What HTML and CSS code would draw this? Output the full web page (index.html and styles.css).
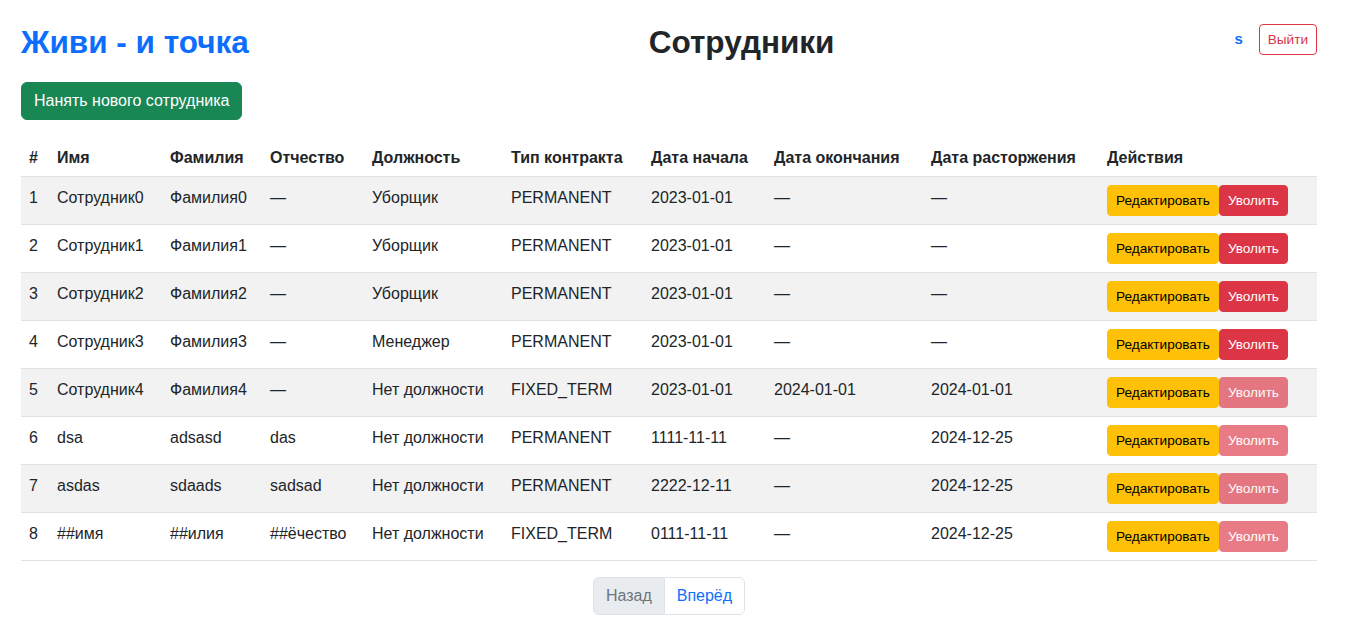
FILE: index.html
```html
<!DOCTYPE html>
<html lang="ru">
<head>
<meta charset="utf-8">
<title>Сотрудники</title>
<link rel="stylesheet" href="styles.css">
</head>
<body>
<div class="page">
  <header class="topbar">
    <h1 class="brand">Живи - и точка</h1>
    <h1 class="title">Сотрудники</h1>
    <div class="user">
      <span class="username">s</span>
      <button class="btn btn-sm btn-outline-danger">Выйти</button>
    </div>
  </header>

  <button class="btn btn-success hire">Нанять нового сотрудника</button>

  <table class="table">
    <colgroup>
      <col class="c-num"><col class="c-name"><col class="c-last"><col class="c-mid"><col class="c-pos"><col class="c-type"><col class="c-start"><col class="c-end"><col class="c-term"><col class="c-act">
    </colgroup>
    <thead>
      <tr><th>#</th><th>Имя</th><th>Фамилия</th><th>Отчество</th><th>Должность</th><th>Тип контракта</th><th>Дата начала</th><th>Дата окончания</th><th>Дата расторжения</th><th>Действия</th></tr>
    </thead>
    <tbody>
      <tr><td>1</td><td>Сотрудник0</td><td>Фамилия0</td><td>—</td><td>Уборщик</td><td>PERMANENT</td><td>2023-01-01</td><td>—</td><td>—</td><td class="act"><div class="actions"><button class="btn btn-sm btn-warning">Редактировать</button><button class="btn btn-sm btn-danger">Уволить</button></div></td></tr>
      <tr><td>2</td><td>Сотрудник1</td><td>Фамилия1</td><td>—</td><td>Уборщик</td><td>PERMANENT</td><td>2023-01-01</td><td>—</td><td>—</td><td class="act"><div class="actions"><button class="btn btn-sm btn-warning">Редактировать</button><button class="btn btn-sm btn-danger">Уволить</button></div></td></tr>
      <tr><td>3</td><td>Сотрудник2</td><td>Фамилия2</td><td>—</td><td>Уборщик</td><td>PERMANENT</td><td>2023-01-01</td><td>—</td><td>—</td><td class="act"><div class="actions"><button class="btn btn-sm btn-warning">Редактировать</button><button class="btn btn-sm btn-danger">Уволить</button></div></td></tr>
      <tr><td>4</td><td>Сотрудник3</td><td>Фамилия3</td><td>—</td><td>Менеджер</td><td>PERMANENT</td><td>2023-01-01</td><td>—</td><td>—</td><td class="act"><div class="actions"><button class="btn btn-sm btn-warning">Редактировать</button><button class="btn btn-sm btn-danger">Уволить</button></div></td></tr>
      <tr><td>5</td><td>Сотрудник4</td><td>Фамилия4</td><td>—</td><td>Нет должности</td><td>FIXED_TERM</td><td>2023-01-01</td><td>2024-01-01</td><td>2024-01-01</td><td class="act"><div class="actions"><button class="btn btn-sm btn-warning">Редактировать</button><button class="btn btn-sm btn-danger" disabled>Уволить</button></div></td></tr>
      <tr><td>6</td><td>dsa</td><td>adsasd</td><td>das</td><td>Нет должности</td><td>PERMANENT</td><td>1111-11-11</td><td>—</td><td>2024-12-25</td><td class="act"><div class="actions"><button class="btn btn-sm btn-warning">Редактировать</button><button class="btn btn-sm btn-danger" disabled>Уволить</button></div></td></tr>
      <tr><td>7</td><td>asdas</td><td>sdaads</td><td>sadsad</td><td>Нет должности</td><td>PERMANENT</td><td>2222-12-11</td><td>—</td><td>2024-12-25</td><td class="act"><div class="actions"><button class="btn btn-sm btn-warning">Редактировать</button><button class="btn btn-sm btn-danger" disabled>Уволить</button></div></td></tr>
      <tr><td>8</td><td>##имя</td><td>##илия</td><td>##ёчество</td><td>Нет должности</td><td>FIXED_TERM</td><td>0111-11-11</td><td>—</td><td>2024-12-25</td><td class="act"><div class="actions"><button class="btn btn-sm btn-warning">Редактировать</button><button class="btn btn-sm btn-danger" disabled>Уволить</button></div></td></tr>
    </tbody>
  </table>

  <nav class="pager">
    <span class="page-link disabled">Назад</span>
    <a class="page-link" href="#">Вперёд</a>
  </nav>
</div>
</body>
</html>
```

FILE: styles.css
```css
* { box-sizing: border-box; }
html, body { margin: 0; background: #fff; }
body {
  font-family: "Liberation Sans", Arial, sans-serif;
  font-size: 16px;
  line-height: 1.5;
  color: #212529;
}
.page {
  width: 1296px;
  margin-left: 21px;
  padding-top: 17px;
}
.topbar {
  display: flex;
  justify-content: space-between;
  align-items: center;
  margin-bottom: 21px;
}
.topbar h1 {
  margin: 0;
  padding-top: 6px;
  font-size: 31.5px;
  line-height: 38px;
  font-weight: 700;
}
.brand { color: #0d6efd; }
.title { color: #212529; }
.user { display: flex; align-items: center; gap: 16px; }
.username { color: #0d6efd; font-weight: 700; font-size: 15px; }

.btn {
  display: inline-block;
  font-family: inherit;
  font-size: 16px;
  line-height: 1.5;
  padding: 6px 12px;
  border: 1px solid transparent;
  border-radius: 6px;
  cursor: pointer;
  background: transparent;
  color: #212529;
}
.btn-sm { font-size: 13.6px; line-height: 21px; padding: 4px 8px; border-radius: 4px; }
.btn-success { background: #198754; border-color: #198754; color: #fff; }
.btn-warning { background: #ffc107; border-color: #ffc107; color: #000; }
.btn-danger { background: #dc3545; border-color: #dc3545; color: #fff; }
.btn-danger:disabled { opacity: .65; cursor: default; }
.btn-outline-danger { border-color: #dc3545; color: #dc3545; }
.hire { display: block; margin-bottom: 16px; }

.table {
  width: 100%;
  border-collapse: collapse;
  table-layout: fixed;
  margin-bottom: 16px;
}
.c-num { width: 28px; }
.c-name { width: 113px; }
.c-last { width: 100px; }
.c-mid { width: 102px; }
.c-pos { width: 139px; }
.c-type { width: 140px; }
.c-start { width: 123px; }
.c-end { width: 157px; }
.c-term { width: 176px; }
.c-act { width: 218px; }
.table th, .table td {
  text-align: left;
  vertical-align: middle;
  border-bottom: 1px solid #dee2e6;
  white-space: nowrap;
}
.table th { font-weight: 700; padding: 10px 8px 6px; }
.table td { padding: 5px 8px 11px; }
.table td.act { padding: 8px; }
.table tbody tr:nth-child(odd) td { background: #f2f2f2; }
.actions { display: flex; }

.pager {
  display: flex;
  justify-content: center;
}
.page-link {
  display: block;
  padding: 6px 12px;
  border: 1px solid #dee2e6;
  color: #0d6efd;
  text-decoration: none;
  background: #fff;
}
.page-link:first-child { border-radius: 6px 0 0 6px; }
.page-link:last-child { border-radius: 0 6px 6px 0; margin-left: -1px; }
.page-link.disabled { background: #e9ecef; color: #6c757d; }
```
